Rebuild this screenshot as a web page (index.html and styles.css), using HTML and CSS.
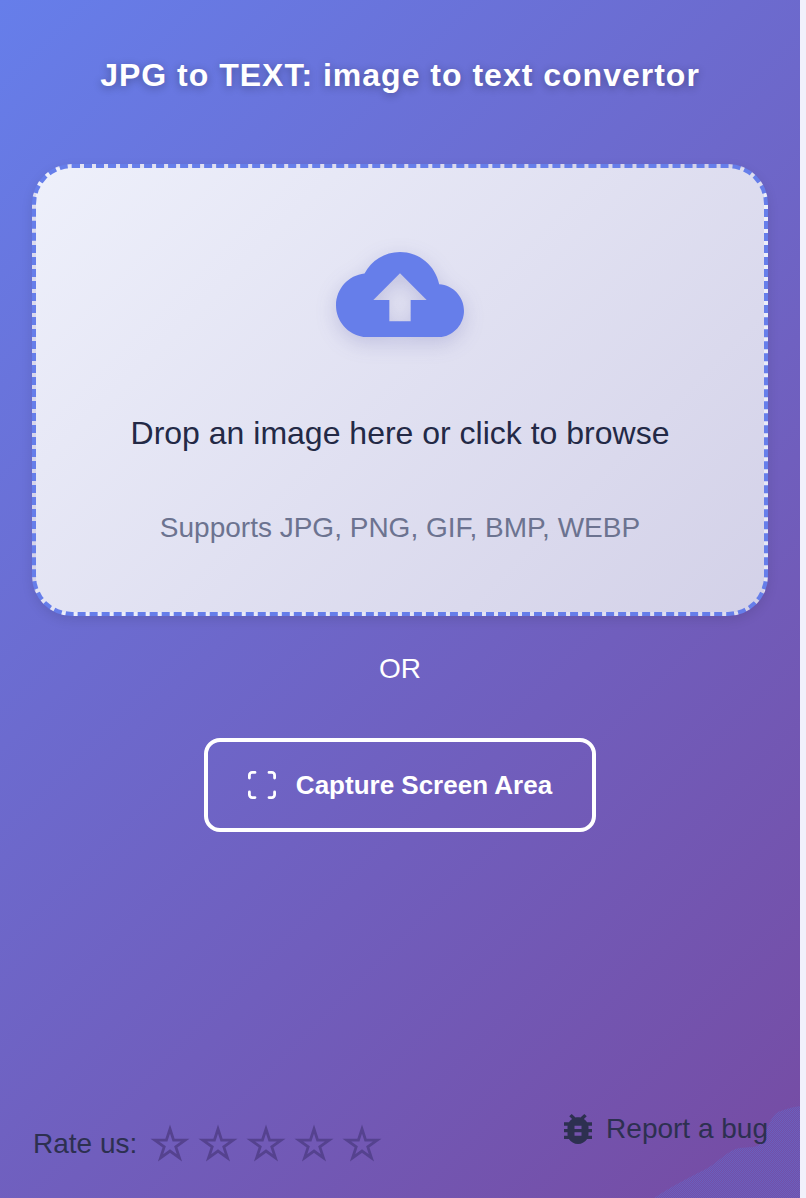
FILE: index.html
```html
<!DOCTYPE html>
<html lang="en">
<head>
<meta charset="utf-8">
<title>JPG to TEXT</title>
<link rel="stylesheet" href="styles.css">
</head>
<body>
<main class="app">
  <h1 class="title">JPG to TEXT: image to text convertor</h1>
  <section class="drop">
    <svg class="cloud" viewBox="0 4 24 16" width="128" height="85.33" aria-hidden="true">
      <path fill="#667eea" fill-rule="evenodd" d="M19.35 10.04C18.67 6.59 15.64 4 12 4 9.110 4 6.600 5.640 5.350 8.040 2.340 8.360 0 10.910 0 14c0 3.310 2.690 6 6 6h13c2.760 0 5-2.240 5-5 0-2.640-2.050-4.780-4.650-4.960zM14 13v4h-4v-4H7l5-5 5 5h-3z"/>
    </svg>
    <p class="drop-main">Drop an image here or click to browse</p>
    <p class="drop-sub">Supports JPG, PNG, GIF, BMP, WEBP</p>
  </section>
  <div class="or">OR</div>
  <button class="capture" type="button">
    <svg class="capture-icon" viewBox="2 2 20 20" width="28" height="28" aria-hidden="true">
      <path fill="none" stroke="#fff" stroke-width="2" stroke-linecap="round" stroke-linejoin="round" d="M3 7V5a2 2 0 0 1 2-2h2M17 3h2a2 2 0 0 1 2 2v2M21 17v2a2 2 0 0 1-2 2h-2M7 21H5a2 2 0 0 1-2-2v-2"/>
    </svg>
    <span>Capture Screen Area</span>
  </button>
  <footer class="foot">
    <div class="rate">
      <span class="rate-label">Rate us:</span>
      <div class="stars">
        <svg class="star" viewBox="0 0 40 40" aria-hidden="true"><path d="M20 5l3.600 11.060H35.200l-9.400 6.840 3.600 11.040L20 27.100l-9.400 6.840 3.600-11.040-9.400-6.840h11.600z"/></svg>
        <svg class="star" viewBox="0 0 40 40" aria-hidden="true"><path d="M20 5l3.600 11.060H35.200l-9.400 6.840 3.600 11.040L20 27.100l-9.400 6.840 3.600-11.040-9.400-6.840h11.600z"/></svg>
        <svg class="star" viewBox="0 0 40 40" aria-hidden="true"><path d="M20 5l3.600 11.060H35.200l-9.400 6.840 3.600 11.040L20 27.100l-9.400 6.840 3.600-11.040-9.400-6.840h11.600z"/></svg>
        <svg class="star" viewBox="0 0 40 40" aria-hidden="true"><path d="M20 5l3.600 11.060H35.200l-9.400 6.840 3.600 11.040L20 27.100l-9.400 6.840 3.600-11.040-9.400-6.840h11.600z"/></svg>
        <svg class="star" viewBox="0 0 40 40" aria-hidden="true"><path d="M20 5l3.600 11.060H35.200l-9.400 6.840 3.600 11.040L20 27.100l-9.400 6.840 3.600-11.040-9.400-6.840h11.600z"/></svg>
      </div>
    </div>
    <a class="bug" href="#">
      <svg class="bug-icon" viewBox="4 3 16 18" width="28" height="30" preserveAspectRatio="none" aria-hidden="true">
        <path fill="#2d3050" d="M20 8h-2.810c-.45-.78-1.070-1.450-1.820-1.960L17 4.410 15.590 3l-2.170 2.170C12.960 5.060 12.490 5 12 5c-.49 0-.96.06-1.410.17L8.410 3 7 4.410l1.620 1.630C7.880 6.550 7.260 7.220 6.810 8H4v2h2.090c-.05.33-.09.66-.09 1v1H4v2h2v1c0 .34.04.67.09 1H4v2h2.810c1.040 1.790 2.970 3 5.190 3s4.150-1.210 5.190-3H20v-2h-2.090c.05-.33.09-.66.09-1v-1h2v-2h-2v-1c0-.34-.04-.67-.09-1H20V8zm-6 8h-4v-2h4v2zm0-4h-4v-2h4v2z"/>
      </svg>
      <span>Report a bug</span>
    </a>
  </footer>
  <svg class="wave" viewBox="0 0 146 92" width="146" height="92" aria-hidden="true">
    <defs>
      <pattern id="dither" width="2" height="2" patternUnits="userSpaceOnUse">
        <rect width="2" height="2" fill="#7350a8"/>
        <rect width="1" height="1" fill="#6a5fbf"/>
        <rect x="1" y="1" width="1" height="1" fill="#6a5fbf"/>
      </pattern>
    </defs>
    <path fill="url(#dither)" d="M0 92C18 80 34 72 52 63 66 55 74 44 85 42 96 41 102 42 106 38 112 28 116 10 124 6 132 3 138 1 146 0V92z"/>
  </svg>
</main>
</body>
</html>
```
FILE: styles.css
```css
* { box-sizing: border-box; }
html { background: #f1f0fb; }
body { margin: 0; font-family: "Liberation Sans", Arial, sans-serif; }
.app {
  position: relative;
  width: 800px;
  height: 1198px;
  padding: 55px 32px 0;
  overflow: hidden;
  display: flex;
  flex-direction: column;
  align-items: center;
  background: linear-gradient(135deg, #667eea 0%, #764ba2 100%);
}
.title {
  margin: 0;
  height: 40px;
  line-height: 40px;
  font-size: 32px;
  font-weight: 700;
  letter-spacing: 1px;
  color: #fff;
  text-shadow: 0 2px 8px rgba(0, 0, 0, .3);
}
.drop {
  width: 736px;
  height: 452px;
  margin-top: 69px;
  padding-top: 84px;
  border: 4px dashed #667eea;
  border-radius: 40px;
  display: flex;
  flex-direction: column;
  align-items: center;
  background: linear-gradient(135deg, #eef0fb 0%, #d3d1e8 100%);
  box-shadow: 0 4px 12px rgba(0, 0, 0, .1);
}
.cloud { display: block; filter: drop-shadow(0 6px 10px rgba(60, 60, 150, .2)); }
.drop-main {
  margin: 76px 0 0;
  font-size: 32px;
  line-height: 40px;
  color: #232946;
}
.drop-sub {
  margin: 55px 0 0;
  font-size: 28px;
  line-height: 40px;
  color: #6c7390;
}
.or {
  margin-top: 33px;
  height: 40px;
  line-height: 40px;
  font-size: 28px;
  color: #fff;
}
.capture {
  margin-top: 49px;
  width: 392px;
  height: 94px;
  display: flex;
  align-items: center;
  justify-content: center;
  gap: 20px;
  border: 4px solid #fff;
  border-radius: 16px;
  background: transparent;
  color: #fff;
  font: 700 26px "Liberation Sans", Arial, sans-serif;
}
.capture-icon { display: block; }
.foot {
  position: absolute;
  left: 33px;
  right: 32px;
  bottom: 34px;
  display: flex;
  justify-content: space-between;
  align-items: flex-end;
}
.rate { display: flex; align-items: center; gap: 13px; }
.rate-label { font-size: 28px; line-height: 40px; color: #2d3050; }
.stars { display: flex; gap: 8px; }
.star {
  width: 40px;
  height: 40px;
  display: block;
  fill: none;
  stroke: #55428f;
  stroke-width: 2.8;
}
.bug {
  position: relative;
  z-index: 1;
  display: flex;
  align-items: center;
  gap: 14px;
  margin-bottom: 19px;
  font-size: 28px;
  color: #2d3050;
  text-decoration: none;
}
.bug-icon { display: block; }
.wave { position: absolute; right: 0; bottom: 0; display: block; }
```
